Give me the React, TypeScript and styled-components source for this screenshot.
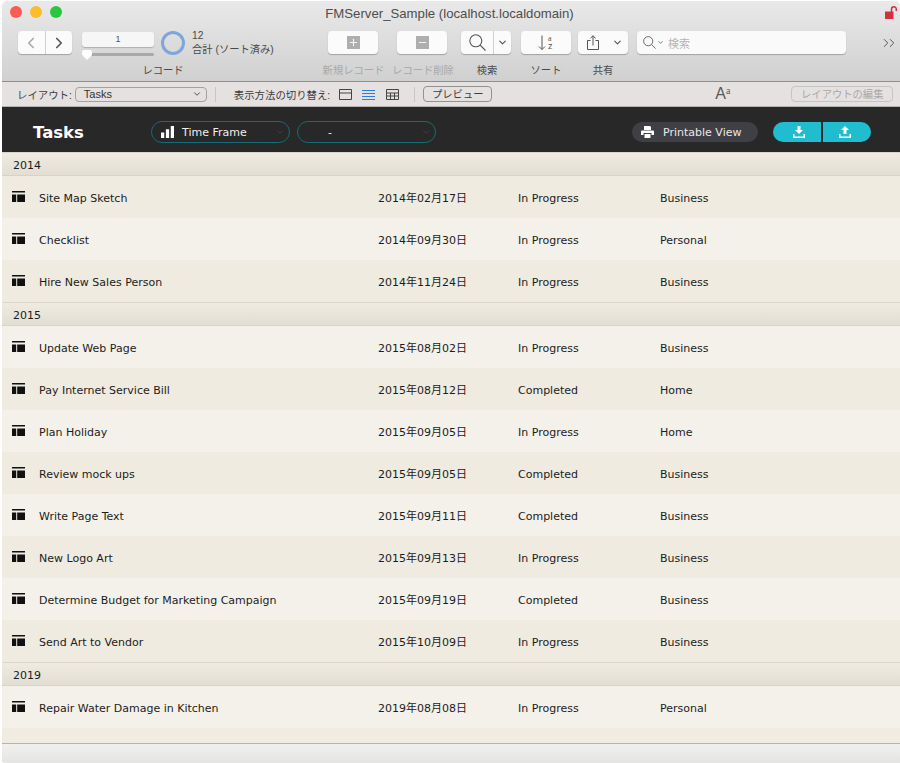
import React from "react";
import styled, { createGlobalStyle } from "styled-components";
import { ChevronLeft, ChevronRight, ChevronDown, Minus, Plus } from "lucide-react";

const Global = createGlobalStyle`
  html, body { margin: 0; padding: 0; background: #fff; }
  body { font-family: "DejaVu Sans", sans-serif; }
  #root { width: 900px; height: 763px; overflow: hidden; }
  * { box-sizing: border-box; }
`;

const UI = `"Liberation Sans", "Noto Sans CJK JP", sans-serif`;

const Win = styled.div`
  width: 900px;
  height: 763px;
  padding: 1px 0 0 2px;
  display: flex;
  flex-direction: column;
  border-radius: 6px 6px 0 6px;
  overflow: hidden;
  font-family: ${UI};
`;

const Chrome = styled.div`
  height: 81px;
  flex: none;
  padding: 0 0 0 16px;
  background: linear-gradient(#e9e9e9, #d0d0d0);
  border-bottom: 1px solid #8e8e8e;
  border-radius: 5px 5px 0 0;
  display: flex;
  flex-direction: column;
`;

const TitleBar = styled.div`
  height: 30px;
  margin-left: -16px;
  display: grid;
  grid-template-columns: 8px auto 1fr auto;
  align-items: center;
  font-size: 13.2px;
  color: #4e4e4e;
`;

const Lights = styled.div`
  grid-column: 2;
  display: flex;
  gap: 8px;
  margin-bottom: 8px;
`;

const Light = styled.span<{ $c: string }>`
  width: 12px;
  height: 12px;
  border-radius: 50%;
  background: ${(p) => p.$c};
`;

const Title = styled.div`
  grid-column: 3;
  text-align: center;
  padding-right: 48px;
  padding-bottom: 6px;
`;

const Lock = styled.svg`
  grid-column: 4;
  width: 13px;
  height: 13px;
  margin: 0 2px 7px 0;
`;

const Tools = styled.div`
  display: flex;
  align-items: flex-start;
`;

const Btn = styled.div<{ $w: number; $ml: number }>`
  width: ${(p) => p.$w}px;
  margin-left: ${(p) => p.$ml}px;
  height: 23px;
  background: #fbfbfb;
  border-radius: 4px;
  box-shadow: 0 1px 1px rgba(0, 0, 0, 0.25);
  display: flex;
  align-items: center;
  justify-content: center;
  color: #555;
  flex: none;
`;

const BtnPart = styled.div<{ $w?: number; $line?: boolean }>`
  width: ${(p) => (p.$w ? `${p.$w}px` : "auto")};
  flex: ${(p) => (p.$w ? "none" : 1)};
  height: 100%;
  display: flex;
  align-items: center;
  justify-content: center;
  border-right: ${(p) => (p.$line ? "1px solid #cfcfcf" : "none")};
`;

const NudgedChevron = styled(ChevronDown)`
  margin-right: 9px;
  flex: none;
`;

const PagerCol = styled.div`
  width: 72px;
  margin-left: 10px;
  margin-top: 1px;
  flex: none;
`;

const Pager = styled.div`
  height: 15px;
  background: #f6f6f6;
  border-radius: 3px;
  box-shadow: 0 1px 1px rgba(0, 0, 0, 0.2);
  text-align: center;
  font-size: 9px;
  line-height: 15px;
  color: #555;
`;

const Track = styled.div`
  height: 3px;
  margin-top: 6px;
  background: #a9a9a9;
  border-radius: 2px;
  position: relative;
`;

const Knob = styled.span`
  position: absolute;
  left: 0;
  top: -3px;
  width: 10px;
  height: 10px;
  background: #fff;
  clip-path: polygon(0 0, 100% 0, 100% 50%, 50% 100%, 0 50%);
  border-radius: 2px;
`;

const Ring = styled.div`
  width: 24px;
  height: 24px;
  margin: 0 0 0 7px;
  border: 3px solid #7ea6dc;
  border-radius: 50%;
  flex: none;
`;

const Count = styled.div`
  margin-left: 7px;
  width: 136px;
  flex: none;
  font-size: 10.3px;
  line-height: 14px;
  color: #4a4a4a;
  margin-top: -2px;
`;

const SearchBox = styled(Btn)`
  justify-content: flex-start;
  padding-left: 6px;
  gap: 1px;
  font-size: 11px;
  color: #b4b4b4;
  background: #fafafa;
`;

const Hint = styled.span`
  margin-left: 3px;
`;

const More = styled.div`
  margin-left: 33px;
  color: #4d4d4d;
  display: flex;
  margin-top: 5px;
`;

const MoreChevron = styled(ChevronRight)`
  margin-right: -8px;
`;

const Square = styled.span`
  width: 13px;
  height: 13px;
  background: #aeaeae;
  color: #f4f4f4;
  display: flex;
  align-items: center;
  justify-content: center;
`;

const Labels = styled.div`
  display: flex;
  height: 16px;
  margin-top: 6px;
`;

const Label = styled.span<{ $w: number; $ml: number; $off?: boolean }>`
  width: ${(p) => p.$w}px;
  margin-left: ${(p) => p.$ml}px;
  flex: none;
  text-align: center;
  white-space: nowrap;
  font-size: 10.3px;
  line-height: 16px;
  color: ${(p) => (p.$off ? "#a9a9a9" : "#4b4b4b")};
`;

const LayoutBar = styled.div`
  height: 25px;
  flex: none;
  background: #e6e1e1;
  border-bottom: 1px solid #b5b2b2;
  display: flex;
  align-items: center;
  padding-left: 15px;
  font-size: 10.4px;
  color: #3c3c3c;
`;

const Select = styled.div`
  width: 132px;
  height: 15px;
  margin-left: 3px;
  border: 1px solid #a3a0a0;
  border-radius: 4px;
  padding: 0 4px 0 8px;
  display: flex;
  align-items: center;
  justify-content: space-between;
  font-size: 11px;
  color: #333;
  flex: none;
`;

const Sep = styled.span<{ $ml: number; $mr: number }>`
  width: 1px;
  height: 15px;
  background: #c9c5c5;
  margin: 0 ${(p) => p.$mr}px 0 ${(p) => p.$ml}px;
  flex: none;
`;

const ViewIcon = styled.svg<{ $ml: number }>`
  width: 13px;
  height: 11px;
  margin-left: ${(p) => p.$ml}px;
  flex: none;
`;

const SmallBtn = styled.div<{ $off?: boolean; $w: number }>`
  width: ${(p) => p.$w}px;
  height: 16px;
  flex: none;
  border: 1px solid ${(p) => (p.$off ? "#c7c4c4" : "#949191")};
  border-radius: 4px;
  text-align: center;
  line-height: 15px;
  font-size: 10.3px;
  white-space: nowrap;
  color: ${(p) => (p.$off ? "#a9a7a7" : "#3c3c3c")};
`;

const AA = styled.div`
  width: 15px;
  margin-left: 223px;
  margin-right: 61px;
  flex: none;
  font-family: "Liberation Sans", sans-serif;
  font-size: 16px;
  color: #5a5a5a;
  white-space: nowrap;
  sup {
    font-family: "Liberation Serif", serif;
    font-size: 10px;
    vertical-align: 5px;
    line-height: 0;
  }
`;

const Header = styled.div`
  height: 45px;
  flex: none;
  padding-top: 5px;
  background: #282828;
  display: flex;
  align-items: center;
  font-family: "DejaVu Sans", sans-serif;
  color: #fff;
`;

const Brand = styled.div`
  width: 149px;
  padding-left: 31px;
  font-size: 16.5px;
  font-weight: 700;
`;

const Drop = styled.div`
  width: 139px;
  height: 22px;
  border: 1px solid #126d76;
  border-radius: 11px;
  margin-right: 7px;
  display: flex;
  align-items: center;
  padding: 0 4px 0 9px;
  font-size: 11px;
  color: #eee;
  flex: none;
`;

const DropText = styled.span<{ $pad: number }>`
  flex: 1;
  padding-left: ${(p) => p.$pad}px;
`;

const PrintBtn = styled.div`
  margin-left: 189px;
  width: 126px;
  height: 20px;
  border-radius: 10px;
  background: #3f4045;
  display: flex;
  align-items: center;
  padding-left: 9px;
  gap: 9px;
  font-size: 11px;
  color: #e8e8e8;
  flex: none;
`;

const Pair = styled.div`
  margin-left: 15px;
  display: flex;
  gap: 2px;
`;

const Cyan = styled.div<{ $side: "l" | "r" }>`
  width: 48px;
  height: 20px;
  background: #20bcd0;
  border-radius: ${(p) => (p.$side === "l" ? "10px 0 0 10px" : "0 10px 10px 0")};
  padding: ${(p) => (p.$side === "l" ? "0 0 0 4px" : "0 4px 0 0")};
  display: flex;
  align-items: center;
  justify-content: center;
`;

const List = styled.div`
  flex: 1;
  min-height: 0;
  font-family: "DejaVu Sans", "Noto Sans CJK JP", sans-serif;
  font-size: 11px;
  line-height: 14px;
  color: #1c1c1c;
  display: flex;
  flex-direction: column;
  background: #f0ece1;
`;

const Group = styled.div`
  height: 24px;
  flex: none;
  padding: 4px 0 0 11px;
  display: flex;
  align-items: center;
  background: linear-gradient(#efebe0, #e2ded4);
  border-top: 1px solid #d8d5cc;
  border-bottom: 1px solid #d6d3cb;
`;

const Row = styled.div<{ $alt: boolean }>`
  height: 42px;
  flex: none;
  padding-top: 4px;
  display: grid;
  grid-template-columns: 37px 339px 140px 142px 1fr;
  align-items: center;
  background: ${(p) => (p.$alt ? "#f4f1ea" : "#efebe0")};
`;

const Cell = styled.span`
  display: block;
  line-height: 14px;
`;

const RowIcon = styled.svg`
  width: 13px;
  height: 11px;
  margin: 0 0 5px 10px;
  box-sizing: content-box;
`;

const Tail = styled.div`
  height: 15px;
  flex: none;
`;

const Foot = styled.div`
  flex: 1;
  border-top: 1px solid #b3b3b0;
  background: linear-gradient(#f0f0ee, #e4e4e2);
`;

const rows: [string, [string, string, string, string][]][] = [
  ["2014", [
    ["Site Map Sketch", "2014年02月17日", "In Progress", "Business"],
    ["Checklist", "2014年09月30日", "In Progress", "Personal"],
    ["Hire New Sales Person", "2014年11月24日", "In Progress", "Business"],
  ]],
  ["2015", [
    ["Update Web Page", "2015年08月02日", "In Progress", "Business"],
    ["Pay Internet Service Bill", "2015年08月12日", "Completed", "Home"],
    ["Plan Holiday", "2015年09月05日", "In Progress", "Home"],
    ["Review mock ups", "2015年09月05日", "Completed", "Business"],
    ["Write Page Text", "2015年09月11日", "Completed", "Business"],
    ["New Logo Art", "2015年09月13日", "In Progress", "Business"],
    ["Determine Budget for Marketing Campaign", "2015年09月19日", "Completed", "Business"],
    ["Send Art to Vendor", "2015年10月09日", "In Progress", "Business"],
  ]],
  ["2019", [
    ["Repair Water Damage in Kitchen", "2019年08月08日", "In Progress", "Personal"],
  ]],
];

const TaskGlyph = () => (
  <RowIcon viewBox="0 0 13 11">
    <path d="M0 0h13v1.600H0zM0 3.500h4.200V11H0zM5.200 3.500H13V11H5.200z" fill="#111" />
  </RowIcon>
);

const Magnifier = ({ size }: { size: number }) => (
  <svg width={size} height={size} viewBox="0 0 17 17" fill="none" stroke="#555" strokeWidth="1.1">
    <circle cx="6.800" cy="6.800" r="6" />
    <path d="M11.200 11.200l5.300 5.300" />
  </svg>
);

export default function App() {
  let n = 0;
  return (
    <>
      <Global />
      <Win>
        <Chrome>
          <TitleBar>
            <Lights>
              <Light $c="#fb5b52" />
              <Light $c="#fdbb2e" />
              <Light $c="#27c83f" />
            </Lights>
            <Title>FMServer_Sample (localhost.localdomain)</Title>
            <Lock viewBox="0 0 13 13">
              <path d="M0 5.500h8.500V13H0z" fill="#d2303c" />
              <path d="M6.500 6V3.200a2.400 2.400 0 0 1 4.800 0V5" fill="none" stroke="#d2303c" strokeWidth="1.5" />
            </Lock>
          </TitleBar>
          <Tools>
            <Btn $w={54} $ml={0}>
              <BtnPart $line><ChevronLeft size={18} strokeWidth={2.2} color="#aaa" /></BtnPart>
              <BtnPart><ChevronRight size={18} strokeWidth={2.2} color="#555" /></BtnPart>
            </Btn>
            <PagerCol>
              <Pager>1</Pager>
              <Track><Knob /></Track>
            </PagerCol>
            <Ring />
            <Count>12<br />合計 (ソート済み)</Count>
            <Btn $w={50} $ml={0}><Square><Plus size={11} strokeWidth={2.4} /></Square></Btn>
            <Btn $w={50} $ml={19}><Square><Minus size={11} strokeWidth={2.4} /></Square></Btn>
            <Btn $w={50} $ml={14}>
              <BtnPart $w={33} $line><Magnifier size={17} /></BtnPart>
              <BtnPart><ChevronDown size={11} strokeWidth={2.5} /></BtnPart>
            </Btn>
            <Btn $w={50} $ml={10}>
              <svg width="20" height="18" viewBox="0 0 20 18" fill="none" stroke="#555">
                <path d="M6 1.500v14M3 12.500l3 3 3-3" />
                <text x="12" y="6.500" fontSize="8" stroke="none" fill="#555" fontFamily="Liberation Serif">a</text>
                <text x="12" y="15" fontSize="9" stroke="none" fill="#555" fontFamily="Liberation Sans">z</text>
              </svg>
            </Btn>
            <Btn $w={50} $ml={7}>
              <BtnPart $w={37}>
                <svg width="12" height="15" viewBox="0 0 12 15" fill="none" stroke="#555" strokeWidth="1">
                  <path d="M3.500 5.500H.5v9h11v-9H8.500M6 10.500V.8M3.500 3.200L6 .8l2.500 2.400" />
                </svg>
              </BtnPart>
              <BtnPart><NudgedChevron size={11} strokeWidth={2.5} /></BtnPart>
            </Btn>
            <SearchBox $w={209} $ml={9}>
              <Magnifier size={13} />
              <ChevronDown size={7} strokeWidth={2.5} color="#555" />
              <Hint>検索</Hint>
            </SearchBox>
            <More>
              <MoreChevron size={14} strokeWidth={1.6} />
              <ChevronRight size={14} strokeWidth={1.6} />
            </More>
          </Tools>
          <Labels>
            <Label $w={64} $ml={113}>レコード</Label>
            <Label $w={64} $ml={126.5} $off>新規レコード</Label>
            <Label $w={64} $ml={5.5} $off>レコード削除</Label>
            <Label $w={40} $ml={12}>検索</Label>
            <Label $w={40} $ml={19}>ソート</Label>
            <Label $w={40} $ml={17}>共有</Label>
          </Labels>
        </Chrome>
        <LayoutBar>
          レイアウト:
          <Select>Tasks<ChevronDown size={10} strokeWidth={2} /></Select>
          <Sep $ml={8} $mr={18} />
          表示方法の切り替え:
          <ViewIcon $ml={9} viewBox="0 0 13 11" fill="none" stroke="#444"><path d="M.5 .5h12v10H.5zM.5 4h12" /></ViewIcon>
          <ViewIcon $ml={10} viewBox="0 0 13 11" fill="none" stroke="#2a7de1"><path d="M0 1.500h13M0 4.500h13M0 7.500h13M0 10.500h13" /></ViewIcon>
          <ViewIcon $ml={11} viewBox="0 0 13 11" fill="none" stroke="#444"><path d="M.5 .5h12v10H.5zM.5 4h12M.5 7h12M4.500 4v6.500M8.500 4v6.500" /></ViewIcon>
          <Sep $ml={15} $mr={8} />
          <SmallBtn $w={69}>プレビュー</SmallBtn>
          <AA>A<sup>a</sup></AA>
          <SmallBtn $w={102} $off>レイアウトの編集</SmallBtn>
        </LayoutBar>
        <Header>
          <Brand>Tasks</Brand>
          <Drop>
            <svg width="13" height="12" viewBox="0 0 12 11" fill="#fff"><path d="M0 6h3v5H0zM4.500 3h3v8h-3zM9 0h3v11H9z" /></svg>
            <DropText $pad={8}>Time Frame</DropText>
            <ChevronDown size={10} color="#444" />
          </Drop>
          <Drop>
            <DropText $pad={21}>-</DropText>
            <ChevronDown size={10} color="#444" />
          </Drop>
          <PrintBtn>
            <svg width="13" height="12" viewBox="0 0 13 12" fill="#fff"><path d="M3 0h6l1 1v3H3zM1 4.500h11a1 1 0 0 1 1 1V9h-2.500V7h-8v2H0V5.500a1 1 0 0 1 1-1zM3.500 8h6v4h-6z" /></svg>
            Printable View
          </PrintBtn>
          <Pair>
            <Cyan $side="l">
              <svg width="12" height="12" viewBox="0 0 12 12" fill="#fff"><path d="M4.500 0h3v4H10L6 8 2 4h2.500zM0 8h1.500v2.500h9V8H12v4H0z" /></svg>
            </Cyan>
            <Cyan $side="r">
              <svg width="12" height="12" viewBox="0 0 12 12" fill="#fff"><path d="M6 0l4 4H7.500v4h-3V4H2zM0 8h1.500v2.500h9V8H12v4H0z" /></svg>
            </Cyan>
          </Pair>
        </Header>
        <List>
          {rows.map(([year, items]) => (
            <React.Fragment key={year}>
              <Group>{year}</Group>
              {items.map((r) => {
                n += 1;
                return (
                  <Row key={r[0]} $alt={n % 2 === 0}>
                    <TaskGlyph />
                    {r.map((c, i) => <Cell key={i}>{c}</Cell>)}
                  </Row>
                );
              })}
            </React.Fragment>
          ))}
          <Tail />
          <Foot />
        </List>
      </Win>
    </>
  );
}
